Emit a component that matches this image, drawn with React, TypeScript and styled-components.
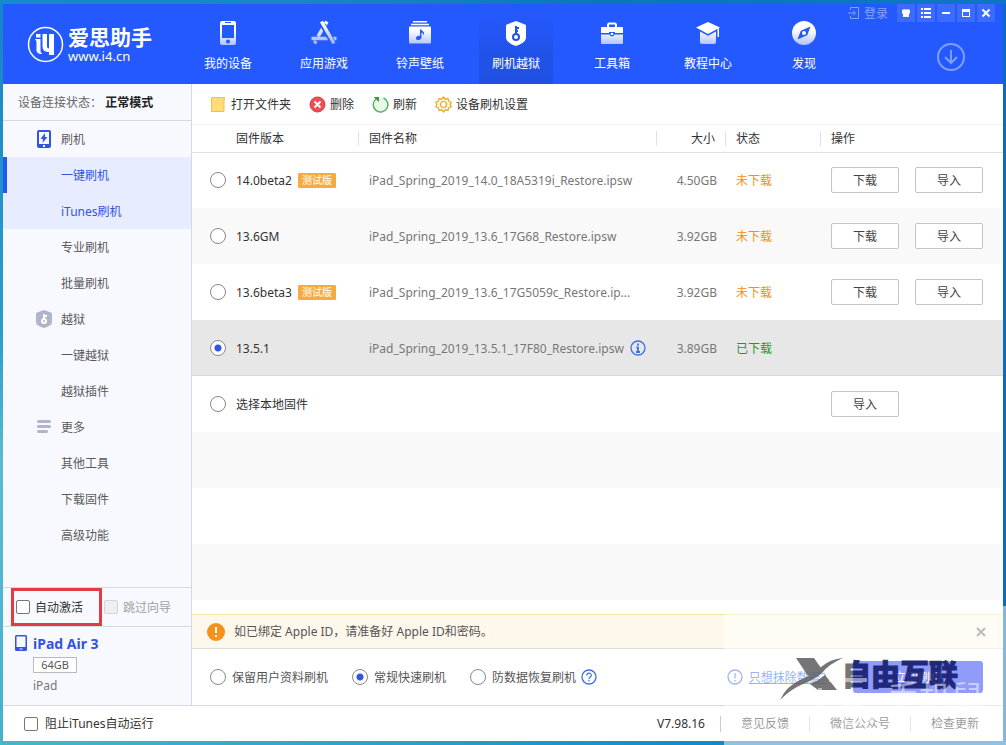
import React from "react";
import styled, { createGlobalStyle, css } from "styled-components";

const Global = createGlobalStyle`
  *, *::before, *::after { box-sizing: border-box; }
  html, body { margin: 0; height: 100%; }
  #root { height: 100%; }
  body, button, input, table {
    font-family: "Noto Sans", "Noto Sans CJK SC", sans-serif;
    font-size: 12px;
    line-height: 19px;
  }
  body { color: #333; }
  button { cursor: pointer; padding: 0; }
`;

const Desktop = styled.div`
  position: relative;
  display: flex;
  min-height: 100%;
  padding: 4px 3px;
  background:
    linear-gradient(90deg, #158bc9 0, #1787c4 30%, #0a78b8 60%, #0d76c4 100%) top / 100% 4px no-repeat,
    linear-gradient(90deg, #48b4d0 0, #2d9fca 40%, #1288c8 72%) bottom / 100% 4px no-repeat,
    linear-gradient(90deg, transparent 50%, #0a6cbd 50%),
    linear-gradient(180deg, #1586c5 0, #2c9dce 45%, #5abad2 62%, #45b0cf 100%);
`;

const Frame = styled.div`
  flex: 1;
  min-width: 0;
  display: flex;
  flex-direction: column;
  background: #fff;
`;

const Header = styled.header`
  display: flex;
  height: 80px;
  background: #2459ff;
  color: #fff;
`;

const Brand = styled.a`
  display: flex;
  align-items: center;
  gap: 4px;
  width: 188px;
  padding-left: 24px;
  color: #fff;
  text-decoration: none;
`;

const BrandText = styled.span`
  display: flex;
  flex-direction: column;
`;

const BrandName = styled.strong`
  font-size: 21px;
  line-height: 24px;
  white-space: nowrap;
`;

const BrandUrl = styled.span`
  font-size: 13px;
  line-height: 14px;
`;

const Nav = styled.nav`
  display: flex;
  gap: 22px;
  flex: 1;
  align-items: flex-end;
`;

const NavItem = styled.button<{ $active?: boolean }>`
  display: flex;
  flex-direction: column;
  align-items: center;
  gap: 8px;
  width: 74px;
  height: 80px;
  padding-top: 16px;
  border: 0;
  color: #fff;
  background: ${(p) => (p.$active ? "linear-gradient(#2459ff 6px, #2152e8 50px, #204fe2)" : "transparent")};
  svg { width: 26px; height: 26px; }
`;

const HeaderSide = styled.div`
  display: flex;
  flex-direction: column;
  align-items: flex-end;
  gap: 20px;
  padding-right: 8px;
`;

const WindowBar = styled.div`
  display: flex;
  gap: 2px;
  height: 18px;
`;

const Login = styled.button`
  display: flex;
  align-items: center;
  gap: 4px;
  margin-right: 7px;
  border: 0;
  background: none;
  color: #86a4ff;
`;

const WindowButton = styled.button`
  display: grid;
  place-items: center;
  width: 18px;
  height: 18px;
  border: 0;
  background: #3c6bff;
  color: #fff;
`;

const DownloadButton = styled.button`
  width: 30px;
  height: 30px;
  margin-right: 29px;
  border: 0;
  background: none;
  color: #7f9fff;
`;

const Body = styled.div`
  flex: 1;
  display: flex;
`;

const Sidebar = styled.aside`
  width: 189px;
  flex: none;
  display: flex;
  flex-direction: column;
  background: #f7f9ff;
  border-right: 1px solid #d5d9e4;
`;

const Status = styled.p`
  height: 37px;
  margin: 0;
  padding: 0 15px;
  border-bottom: 1px solid #d5d9e4;
  line-height: 37px;
  color: #666;
  white-space: nowrap;
  strong { color: #222; }
`;

const Menu = styled.ul`
  flex: 1;
  list-style: none;
  margin: 0;
  padding: 0;
`;

const MenuItem = styled.a<{ $level: "group" | "sub"; $lit?: boolean; $current?: boolean }>`
  display: flex;
  align-items: center;
  height: 36px;
  padding-left: ${(p) => (p.$level === "group" ? 32 : 58)}px;
  gap: 8px;
  color: ${(p) => (p.$lit ? "#3354dc" : "#5a5a5a")};
  background: ${(p) => (p.$lit ? "#e7ecfe" : "transparent")};
  text-decoration: none;
  ${(p) => p.$current && css`box-shadow: inset 4px 0 #2459f0;`}
`;

const CheckRow = styled.div`
  display: flex;
  align-items: center;
  gap: 2px;
  height: 40px;
  padding-left: 8px;
  border: solid #d5d9e4;
  border-width: 1px 0;
`;

const CheckLabel = styled.label<{ $marked?: boolean; $muted?: boolean }>`
  display: flex;
  align-items: center;
  gap: ${(p) => (p.$marked || p.$muted ? 5 : 7)}px;
  height: ${(p) => (p.$marked ? 38 : 36)}px;
  color: ${(p) => (p.$muted ? "#a0a0a0" : "#333")};
  ${(p) => p.$marked && css`
    width: 91px;
    padding-left: 2px;
    border: 3px solid #e23b41;
  `}
`;

const Checkbox = styled.input.attrs({ type: "checkbox" })`
  appearance: none;
  flex: none;
  width: 14px;
  height: 14px;
  margin: 0;
  border: 1px solid #777;
  border-radius: 2px;
  background: #fff;
  &:checked { background: #3354dc; }
  &:disabled { border-color: #d5d5d5; background: #efefef; }
`;

const Device = styled.section`
  height: 78px;
  padding: 8px 12px;
  display: grid;
  grid-template-columns: 12px auto;
  column-gap: 6px;
  justify-content: start;
  align-content: start;
  h2 { margin: 0; font-size: 14px; line-height: 18px; color: #3354dc; }
  p { grid-column: 2; margin: 4px 0 0; line-height: 18px; color: #777; }
`;

const Capacity = styled.span`
  grid-column: 2;
  justify-self: start;
  width: 44px;
  height: 16px;
  margin-top: 4px;
  border: 1px solid #bbb;
  background: #fff;
  font-size: 11px;
  line-height: 14px;
  text-align: center;
  color: #555;
`;

const Main = styled.main`
  flex: 1;
  min-width: 0;
  display: flex;
  flex-direction: column;
`;

const Toolbar = styled.div`
  display: flex;
  align-items: center;
  gap: 18px;
  height: 41px;
  padding-left: 18px;
  border-bottom: 1px solid #eef0f4;
`;

const Tool = styled.button`
  display: flex;
  align-items: center;
  gap: 4px;
  border: 0;
  background: none;
  color: #333;
`;

const Table = styled.table`
  width: 100%;
  table-layout: fixed;
  border-collapse: collapse;
`;

const Head = styled.th<{ $align?: "right"; $indent?: number; $last?: boolean }>`
  height: 27px;
  padding: 0 11px 0 ${(p) => p.$indent ?? 10}px;
  border-bottom: 1px solid #dfe2ea;
  font-weight: 400;
  text-align: ${(p) => p.$align ?? "left"};
  ${(p) => !p.$last && css`background: linear-gradient(#dde1ea, #dde1ea) right center / 1px 15px no-repeat;`}
`;

const Row = styled.tr<{ $selected?: boolean }>`
  height: 56px;
  &:nth-child(even) { background: #f9f9f9; }
  ${(p) => p.$selected && css`
    &:nth-child(even) { background: #e7e7e7; box-shadow: inset 0 -1px #d9d9d9; }
  `}
`;

const Cell = styled.td<{ $align?: "right"; $tone?: string }>`
  padding: 0 9px 0 10px;
  text-align: ${(p) => p.$align ?? "left"};
  color: ${(p) => p.$tone ?? "#777"};
  white-space: nowrap;
`;

const RadioLabel = styled.label<{ $gap?: number; $tone?: string }>`
  display: flex;
  align-items: center;
  gap: ${(p) => p.$gap ?? 6}px;
  color: ${(p) => p.$tone ?? "#333"};
`;

const VersionCell = styled(Cell)`
  padding: 0 0 0 18px;
`;

const Radio = styled.input.attrs({ type: "radio" })`
  appearance: none;
  flex: none;
  width: 16px;
  height: 16px;
  margin: 0;
  border: 1px solid #888;
  border-radius: 50%;
  background: #fff;
  &:checked { background: radial-gradient(circle, #2f55e6 0 3px, #fff 4px); }
`;

const Tag = styled.span`
  margin-left: -4px;
  height: 15px;
  padding: 0 4px;
  border-radius: 1px;
  background: #f5ac3f;
  color: #fff;
  font-size: 10px;
  line-height: 15px;
`;

const FileName = styled.span`
  display: flex;
  align-items: center;
  gap: 6px;
`;

const Actions = styled.div`
  display: flex;
  gap: 16px;
`;

const ActionButton = styled.button`
  width: 68px;
  height: 26px;
  border: 1px solid #c4c4c4;
  border-radius: 2px;
  background: #fff;
  color: #444;
`;

const Notice = styled.div`
  display: flex;
  align-items: center;
  gap: 9px;
  height: 35px;
  margin-top: auto;
  padding: 0 16px 0 15px;
  border-top: 1px solid #f3e6a6;
  border-bottom: 1px solid #e0dcd6;
  background: #fef8ec;
  color: #555;
  span { flex: 1; }
`;

const Close = styled.button`
  width: 12px;
  height: 12px;
  border: 0;
  background: none;
  color: #777;
  svg { display: block; }
`;

const Options = styled.div`
  display: flex;
  align-items: center;
  gap: 24px;
  height: 56px;
  padding: 0 20px 0 18px;
`;

const WithHelp = styled.span`
  display: flex;
  align-items: center;
  gap: 5px;
`;

const EraseLink = styled.a`
  display: flex;
  align-items: center;
  gap: 6px;
  margin: 0 3px 0 auto;
  color: #2a67ee;
  white-space: nowrap;
`;

const FlashButton = styled.button`
  width: 130px;
  height: 32px;
  border: 0;
  border-radius: 3px;
  background: #2238f2;
  color: #fff;
`;

const Footer = styled.footer`
  display: flex;
  align-items: center;
  height: 36px;
  padding: 0 24px 0 21px;
  border-top: 1px solid #d5d9e4;
`;

const FooterLinks = styled.div`
  display: flex;
  align-items: center;
  margin-left: auto;
  a {
    padding: 0 20px;
    border-left: 1px solid #ccc;
    line-height: 16px;
    color: #333;
    text-decoration: none;
  }
  a:last-child { padding-right: 0; }
`;

const AppVersion = styled.span`
  margin-right: 15px;
`;

const Veil = styled.div`
  position: absolute;
  right: 0;
  bottom: 0;
  width: 282px;
  height: 139px;
  background: rgba(255, 255, 255, 0.5);
  pointer-events: none;
  svg { display: block; }
`;

const navIcons: Record<string, React.ReactNode> = {
  phone: (
    <path fillRule="evenodd" fill="url(#fade)" d="M7 1h12a2 2 0 0 1 2 2v20a2 2 0 0 1-2 2H7a2 2 0 0 1-2-2V3a2 2 0 0 1 2-2zm0 4v13h12V5zm3-3v1h6V2zm3 17.500a2 2 0 1 0 0 4 2 2 0 0 0 0-4z" />
  ),
  store: (
    <g fill="none">
      <path stroke="url(#fadeStroke)" strokeWidth="3.500" d="M16 1.500L7 16.500M.5 18.500H17M20 18.500h5.500M5 21l-1.500 2.500" />
      <path stroke="#2459ff" strokeWidth="6" d="M12 5l9 16" />
      <path stroke="url(#fadeStroke)" strokeWidth="3.500" d="M10.500 1.500L23 23.500" />
    </g>
  ),
  music: (
    <>
      <path d="M6 1.800h14M4 4.600h18" stroke="#fff" strokeWidth="1.500" />
      <path fillRule="evenodd" fill="url(#fade)" d="M3 6.500h20a1 1 0 0 1 1 1v15a1 1 0 0 1-1 1H3a1 1 0 0 1-1-1v-15a1 1 0 0 1 1-1zm10 3v6.500c-2-.6-4 .5-4 2.200 0 1.500 1.300 2.100 2.600 1.900 1.700-.2 2.900-1.300 2.900-3V12.500c1.500.4 2 1.500 1.500 3 2-2 .8-3.800-.5-4.600-.8-.5-1-.9-1-1.400z" />
    </>
  ),
  key: (
    <>
      <path fill="#fff" d="M13 1l9 3.500c1 .4 1 1 1 2V17c0 5-5 7-10 9-5-2-10-4-10-9V6.500c0-1 0-1.600 1-2z" />
      <g stroke="#2152e8" strokeWidth="2" fill="none"><circle cx="13" cy="17" r="3" /><path d="M13 14V6M13 8h3M13 11h2" /></g>
    </>
  ),
  tools: (
    <>
      <path d="M9 7V5a1.500 1.500 0 0 1 1.500-1.500h5A1.500 1.500 0 0 1 17 5v2" fill="none" stroke="#fff" strokeWidth="2" />
      <path fill="#fff" d="M3 7h20a1 1 0 0 1 1 1v5h-8v-1h-6v1H2V8a1 1 0 0 1 1-1z" />
      <path fill="url(#fade)" d="M2 14.500h8.500a2.600 2.600 0 0 0 5 0H24V23a1 1 0 0 1-1 1H3a1 1 0 0 1-1-1z" />
      <path fill="#fff" d="M11.800 13h2.400v2h-2.400z" />
    </>
  ),
  hat: (
    <>
      <path fill="#fff" d="M13 2l12 5.500L13 14 1 7.500zM22.500 8.500H24V17h-1.500z" />
      <path fill="url(#fade)" d="M5 11.500l8 4.300 8-4.300V22c0 1-.6 2-2 2H7c-1.400 0-2-1-2-2z" />
    </>
  ),
  compass: (
    <>
      <circle cx="13" cy="13" r="12" fill="url(#fade)" />
      <path fill="#2459ff" d="M19.500 6.500l-3.300 8.800-9.700 4.200 3.300-8.800z" />
      <circle cx="13" cy="13" r="2" fill="#fff" />
    </>
  ),
};

const NAV = [
  ["phone", "我的设备"],
  ["store", "应用游戏"],
  ["music", "铃声壁纸"],
  ["key", "刷机越狱"],
  ["tools", "工具箱"],
  ["hat", "教程中心"],
  ["compass", "发现"],
];

const windowGlyphs: [string, React.ReactNode][] = [
  ["皮肤", <path fill="currentColor" d="M2 3l2.500-1q1.500 1.200 3 0L10 3v3L9 7v3H3V7L2 6z" />],
  ["菜单", <path stroke="currentColor" strokeWidth="2" d="M1 2h2M4 2h7M1 6h2M4 6h7M1 10h2M4 10h7" />],
  ["最小化", <path stroke="currentColor" strokeWidth="2" d="M2 6h8" />],
  ["最大化", <path fill="currentColor" fillRule="evenodd" d="M2 2h8v8H2zm1 3v4h6V5z" />],
  ["关闭", <path stroke="currentColor" strokeWidth="2" d="M2.500 2.500l7 7M9.500 2.500l-7 7" />],
];

const FlashIcon = () => (
  <svg width="18" height="20" viewBox="0 0 18 20" aria-hidden="true">
    <path fill="#3354dc" fillRule="evenodd" d="M4 1h10a2 2 0 0 1 2 2v14a2 2 0 0 1-2 2H4a2 2 0 0 1-2-2V3a2 2 0 0 1 2-2zm0 2v12h10V3zm4 13v2h2v-2z" />
    <path fill="#3354dc" d="M10 4L5.500 10H8l-.5 4 5-6H10z" />
  </svg>
);

const ShieldIcon = () => (
  <svg width="18" height="20" viewBox="0 0 18 20" aria-hidden="true">
    <path fill="#b0b5cb" d="M9 1l7 2.500q1 .4 1 1.500v8c0 3.500-4 4.500-8 6-4-1.500-8-2.500-8-6V5q0-1.100 1-1.500z" />
    <g stroke="#fff" strokeWidth="2" fill="none"><circle cx="9" cy="12" r="2" /><path d="M9 10V5M9 7h3" /></g>
  </svg>
);

const MoreIcon = () => (
  <svg width="18" height="20" viewBox="0 0 18 20" aria-hidden="true">
    <path stroke="#b0b5cb" strokeWidth="3" strokeLinecap="round" d="M3.500 4.500h11M3.500 9.500h11M3.500 14.500h8" />
  </svg>
);

const MENU: { text: string; icon?: React.ReactNode; lit?: boolean; current?: boolean }[] = [
  { text: "刷机", icon: <FlashIcon /> },
  { text: "一键刷机", lit: true, current: true },
  { text: "iTunes刷机", lit: true },
  { text: "专业刷机" },
  { text: "批量刷机" },
  { text: "越狱", icon: <ShieldIcon /> },
  { text: "一键越狱" },
  { text: "越狱插件" },
  { text: "更多", icon: <MoreIcon /> },
  { text: "其他工具" },
  { text: "下载固件" },
  { text: "高级功能" },
];

const TOOLS: [string, React.ReactNode][] = [
  ["打开文件夹", <path fill="#fbdc76" stroke="#eac252" d="M1.500 1.500h13l-.5 4v10H1.500z" />],
  ["删除", <><circle cx="8.500" cy="8.500" r="7.500" fill="#ee4f55" stroke="#d63a43" /><path d="M5.500 5.500l6 6M11.500 5.500l-6 6" stroke="#fff" strokeWidth="2" /></>],
  ["刷新", <><circle cx="8.500" cy="8.500" r="6.500" fill="#e6fae6" /><path d="M11.500 2A7.300 7.300 0 1 1 4 3" fill="none" stroke="#55b35d" strokeWidth="1.500" /><path fill="#319c45" d="M1.500 1H7v5z" /></>],
  ["设备刷机设置", <><path d="M8.500 1l1.800 2.200 2.700-.7.700 2.600 2.500 1.100-1 2.300 1 2.300-2.500 1.100-.7 2.600-2.700-.7L8.500 16l-1.800-2.200-2.700.7-.7-2.600-2.500-1.100 1-2.300-1-2.300 2.500-1.100.7-2.600 2.700.7z" fill="#fff3cf" stroke="#e2aa35" strokeWidth="1.200" /><circle cx="8.500" cy="8.500" r="3" fill="#fff" stroke="#e2aa35" strokeWidth="1.200" /></>],
];

const FIRMWARE = [
  { version: "14.0beta2", beta: true, file: "iPad_Spring_2019_14.0_18A5319i_Restore.ipsw", size: "4.50GB" },
  { version: "13.6GM", file: "iPad_Spring_2019_13.6_17G68_Restore.ipsw", size: "3.92GB" },
  { version: "13.6beta3", beta: true, file: "iPad_Spring_2019_13.6_17G5059c_Restore.ip...", size: "3.92GB" },
  { version: "13.5.1", file: "iPad_Spring_2019_13.5.1_17F80_Restore.ipsw", size: "3.89GB", ready: true },
];

const Badge = ({ kind }: { kind: "info" | "help" | "alert" }) => (
  <svg width="16" height="16" viewBox="0 0 16 16" fill="none" stroke="#3f6fe0" aria-hidden="true">
    <circle cx="8" cy="8" r="7" strokeWidth="1.300" />
    {kind === "info" && <path strokeWidth="1.800" d="M8 3.500v2M6.500 7.500H8V12M6 12h4" />}
    {kind === "help" && <path strokeWidth="1.200" d="M5.800 6.500c0-3.200 4.500-3 4.500-.3C10.300 8 8 7.900 8 10M8 11v1.500" />}
    {kind === "alert" && <path strokeWidth="1.300" d="M8 4v5.500M8 11v1.500" />}
  </svg>
);

export default function App() {
  return (
    <>
      <Global />
      <Desktop>
        <Frame>
          <Header>
            <Brand href="#">
              <svg width="37" height="37" viewBox="0 0 37 37" aria-hidden="true">
                <defs>
                  <linearGradient id="fade" gradientUnits="userSpaceOnUse" x1="0" y1="10" x2="0" y2="26">
                    <stop offset="0" stopColor="#fff" /><stop offset="1" stopColor="#a9bdff" />
                  </linearGradient>
                  <linearGradient id="fadeStroke" gradientUnits="userSpaceOnUse" x1="0" y1="4" x2="0" y2="26">
                    <stop offset="0" stopColor="#fff" /><stop offset="1" stopColor="#90aaff" />
                  </linearGradient>
                </defs>
                <circle cx="18.500" cy="18.500" r="17" fill="none" stroke="#fff" strokeWidth="1.500" />
                <path fill="#fff" d="M9 8h4.500v3.500H9zM8 13h5.500v12q0 2 2 3-5 .5-6-3V15.500zM15.500 8H20v12.500q0 2 2 2V8h5v21h-5v-3q-6.500 0-6.500-5.500z" />
              </svg>
              <BrandText>
                <BrandName>爱思助手</BrandName>
                <BrandUrl>www.i4.cn</BrandUrl>
              </BrandText>
            </Brand>
            <Nav>
              {NAV.map(([icon, text]) => (
                <NavItem key={icon} $active={icon === "key"}>
                  <svg viewBox="0 0 26 26" aria-hidden="true">{navIcons[icon]}</svg>
                  {text}
                </NavItem>
              ))}
            </Nav>
            <HeaderSide>
              <WindowBar>
                <Login>
                  <svg width="12" height="12" viewBox="0 0 12 12" fill="none" stroke="currentColor" aria-hidden="true">
                    <path d="M2.500 3V.5h8v11h-8V9M0 6h7M5 3.500L7.500 6 5 8.500" />
                  </svg>
                  登录
                </Login>
                {windowGlyphs.map(([name, glyph]) => (
                  <WindowButton key={name} aria-label={name}>
                    <svg width="12" height="12" viewBox="0 0 12 12" aria-hidden="true">{glyph}</svg>
                  </WindowButton>
                ))}
              </WindowBar>
              <DownloadButton aria-label="下载管理">
                <svg width="30" height="30" viewBox="0 0 30 30" fill="none" stroke="currentColor" strokeWidth="2" aria-hidden="true">
                  <circle cx="15" cy="15" r="13" /><path d="M15 8v13M9 15l6 6 6-6" />
                </svg>
              </DownloadButton>
            </HeaderSide>
          </Header>
          <Body>
            <Sidebar>
              <Status>设备连接状态： <strong>正常模式</strong></Status>
              <Menu>
                {MENU.map((m) => (
                  <li key={m.text}>
                    <MenuItem href="#" $level={m.icon ? "group" : "sub"} $lit={m.lit} $current={m.current}>
                      {m.icon}{m.text}
                    </MenuItem>
                  </li>
                ))}
              </Menu>
              <CheckRow>
                <CheckLabel $marked><Checkbox />自动激活</CheckLabel>
                <CheckLabel $muted><Checkbox disabled />跳过向导</CheckLabel>
              </CheckRow>
              <Device>
                <svg width="12" height="16" viewBox="0 1 12 16" aria-hidden="true">
                  <path fill="#3354dc" fillRule="evenodd" d="M1.500 1h9A1.500 1.500 0 0 1 12 2.500v13a1.500 1.500 0 0 1-1.500 1.500h-9A1.500 1.500 0 0 1 0 15.500v-13A1.500 1.500 0 0 1 1.500 1zm0 1.500v10.500h9V2.500zm3 12v1h3v-1z" />
                </svg>
                <h2>iPad Air 3</h2>
                <Capacity>64GB</Capacity>
                <p>iPad</p>
              </Device>
            </Sidebar>
            <Main>
              <Toolbar>
                {TOOLS.map(([text, icon]) => (
                  <Tool key={text}>
                    <svg width="17" height="17" viewBox="0 0 17 17" aria-hidden="true">{icon}</svg>
                    {text}
                  </Tool>
                ))}
              </Toolbar>
              <Table>
                <colgroup>
                  <col width="167" /><col /><col width="69" /><col width="95" /><col width="182" />
                </colgroup>
                <thead>
                  <tr>
                    <Head $indent={44}>固件版本</Head>
                    <Head>固件名称</Head>
                    <Head $align="right">大小</Head>
                    <Head>状态</Head>
                    <Head $last>操作</Head>
                  </tr>
                </thead>
                <tbody>
                  {FIRMWARE.map((f) => (
                    <Row key={f.version} $selected={f.ready}>
                      <VersionCell>
                        <RadioLabel $gap={10}>
                          <Radio name="firmware" defaultChecked={f.ready} />
                          {f.version}
                          {f.beta && <Tag>测试版</Tag>}
                        </RadioLabel>
                      </VersionCell>
                      <Cell><FileName>{f.file}{f.ready && <Badge kind="info" />}</FileName></Cell>
                      <Cell $align="right">{f.size}</Cell>
                      <Cell $tone={f.ready ? "#1a9e28" : "#f0930a"}>{f.ready ? "已下载" : "未下载"}</Cell>
                      <Cell>
                        {!f.ready && <Actions><ActionButton>下载</ActionButton><ActionButton>导入</ActionButton></Actions>}
                      </Cell>
                    </Row>
                  ))}
                  <Row>
                    <VersionCell colSpan={4}>
                      <RadioLabel $gap={10}><Radio name="firmware" />选择本地固件</RadioLabel>
                    </VersionCell>
                    <Cell><Actions><ActionButton>导入</ActionButton></Actions></Cell>
                  </Row>
                  <Row><Cell colSpan={5} /></Row>
                  <Row><Cell colSpan={5} /></Row>
                  <Row><Cell colSpan={5} /></Row>
                </tbody>
              </Table>
              <Notice>
                <svg width="18" height="18" viewBox="0 0 18 18" aria-hidden="true">
                  <circle cx="9" cy="9" r="9" fill="#f5921e" /><path d="M9 4v6M9 12v2" stroke="#fff" strokeWidth="2" />
                </svg>
                <span>如已绑定 Apple ID，请准备好 Apple ID和密码。</span>
                <Close aria-label="关闭提示">
                  <svg width="12" height="12" viewBox="0 0 12 12" aria-hidden="true"><path d="M2 2l8 8M10 2l-8 8" stroke="currentColor" strokeWidth="2" /></svg>
                </Close>
              </Notice>
              <Options>
                <RadioLabel $tone="#555"><Radio name="mode" />保留用户资料刷机</RadioLabel>
                <RadioLabel $tone="#555"><Radio name="mode" defaultChecked />常规快速刷机</RadioLabel>
                <WithHelp>
                  <RadioLabel $tone="#555"><Radio name="mode" />防数据恢复刷机</RadioLabel>
                  <Badge kind="help" />
                </WithHelp>
                <EraseLink href="#"><Badge kind="alert" />只想抹除数据?</EraseLink>
                <FlashButton>立即刷机</FlashButton>
              </Options>
            </Main>
          </Body>
          <Footer>
            <CheckLabel><Checkbox />阻止iTunes自动运行</CheckLabel>
            <FooterLinks>
              <AppVersion>V7.98.16</AppVersion>
              <a href="#">意见反馈</a>
              <a href="#">微信公众号</a>
              <a href="#">检查更新</a>
            </FooterLinks>
          </Footer>
        </Frame>
        <Veil>
          <svg width="282" height="139" viewBox="0 0 282 139" fontFamily="Noto Sans CJK SC, sans-serif">
            <defs>
              <linearGradient id="mark" gradientUnits="userSpaceOnUse" x1="128" y1="0" x2="130" y2="0">
                <stop offset="0" stopColor="#5d5e60" /><stop offset="1" stopColor="#0c1466" />
              </linearGradient>
            </defs>
            <g opacity="0.850">
              <path fill="#5d5e60" d="M72 52h18l7 10q-6 5-13 8zM86 78q8-3 15-9l12 15H94zM119 52q-14 6-21 15-8 7-19 11-12 5-23 16 6-14 22-21 12-5 19-12 9-8 22-9z" />
              <text x="118" y="80" fontSize="29" fontWeight="900" fill="url(#mark)" stroke="url(#mark)" strokeWidth="1">自由互联</text>
            </g>
            <g fill="none" stroke="#fff" opacity="0.500">
              <path d="M105 74h38M96 82v34q0 8 8 8h14" strokeWidth="4" />
              <circle cx="128" cy="108" r="10" strokeWidth="3" />
              <circle cx="144" cy="110" r="5" strokeWidth="3" />
            </g>
            <text x="163" y="103" fontSize="32" fill="#fff" opacity="0.500">手机鼠</text>
          </svg>
        </Veil>
      </Desktop>
    </>
  );
}
